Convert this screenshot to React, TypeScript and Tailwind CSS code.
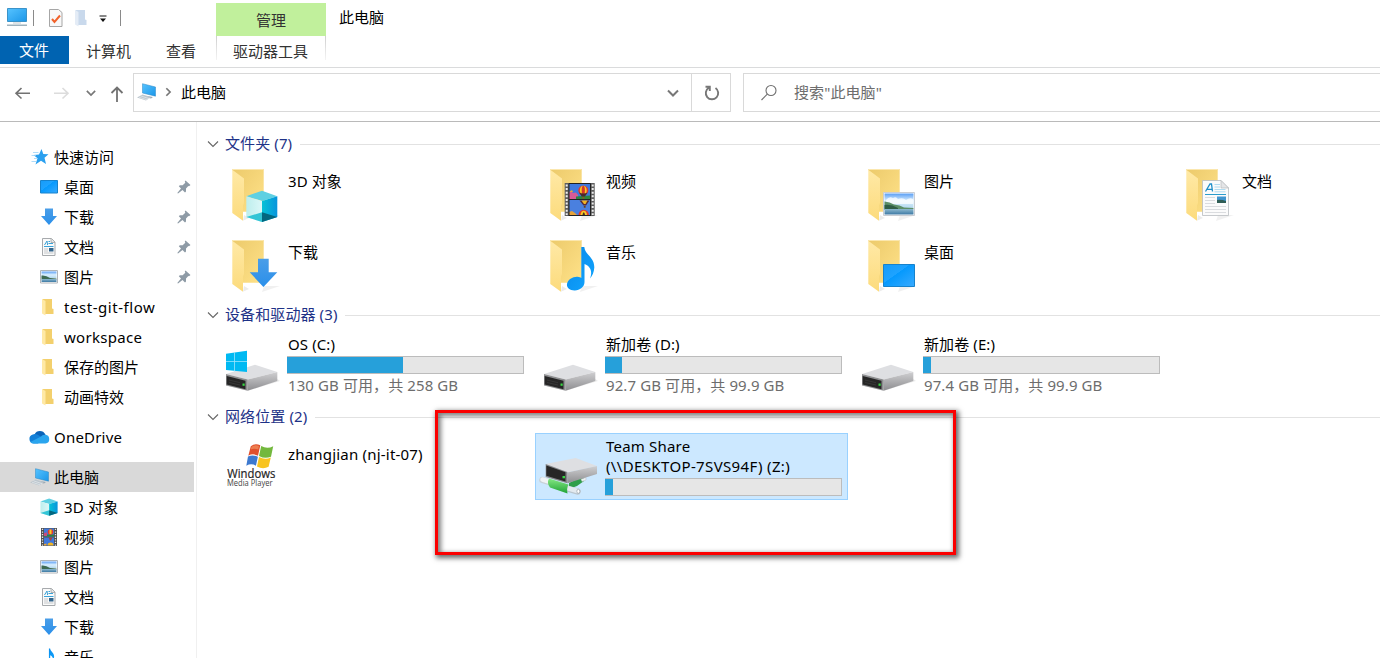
import React, { ReactNode } from "react";

const Defs = () => (
  <svg width="0" height="0" className="absolute">
    <defs>
      <linearGradient id="back" x1="0" y1="0" x2="1" y2="1">
        <stop offset="0" stopColor="#ecca6b" />
        <stop offset="1" stopColor="#ffe289" />
      </linearGradient>
      <linearGradient id="flap" x1="0" y1="0" x2="0" y2="1">
        <stop offset="0" stopColor="#ffe9a6" />
        <stop offset="1" stopColor="#fcdb7c" />
      </linearGradient>
      <linearGradient id="desk" x1="0" y1="0" x2="1" y2="1">
        <stop offset="0" stopColor="#169bf8" />
        <stop offset="0.42" stopColor="#1ea3ff" />
        <stop offset="0.43" stopColor="#0599fd" />
        <stop offset="1" stopColor="#38aaff" />
      </linearGradient>
      <linearGradient id="sky" x1="0" y1="0" x2="0" y2="1">
        <stop offset="0" stopColor="#5a9ef4" />
        <stop offset="0.5" stopColor="#d9efff" />
        <stop offset="1" stopColor="#b5d9ee" />
      </linearGradient>
      <linearGradient id="water" x1="0" y1="0" x2="0" y2="1">
        <stop offset="0" stopColor="#8db9cf" />
        <stop offset="1" stopColor="#3d79a4" />
      </linearGradient>
      <linearGradient id="arrow" x1="0" y1="0" x2="0" y2="1">
        <stop offset="0" stopColor="#4a9ee8" />
        <stop offset="1" stopColor="#2a8fea" />
      </linearGradient>
      <linearGradient id="cubeL" x1="0" y1="0" x2="1" y2="0">
        <stop offset="0" stopColor="#bdeeed" />
        <stop offset="1" stopColor="#dcf7f8" />
      </linearGradient>
      <linearGradient id="cubeR" x1="0" y1="0" x2="1" y2="0">
        <stop offset="0" stopColor="#05c2d6" />
        <stop offset="1" stopColor="#0794dc" />
      </linearGradient>
      <linearGradient id="side" x1="0" y1="0" x2="0" y2="1">
        <stop offset="0" stopColor="#cfcfd1" />
        <stop offset="1" stopColor="#8d8d90" />
      </linearGradient>
      <linearGradient id="note" x1="0" y1="0" x2="1" y2="1">
        <stop offset="0" stopColor="#0787e8" />
        <stop offset="1" stopColor="#12a6ff" />
      </linearGradient>
      <linearGradient id="green" x1="0" y1="0" x2="0" y2="1">
        <stop offset="0" stopColor="#86e885" />
        <stop offset="1" stopColor="#1fa335" />
      </linearGradient>
      <linearGradient id="screen" x1="0" y1="0" x2="1" y2="1">
        <stop offset="0" stopColor="#56c3ff" />
        <stop offset="1" stopColor="#1b96e8" />
      </linearGradient>
    </defs>
  </svg>
);

/* ---------- artwork shared by the large and small icons ---------- */

const Cube = () => (
  <g>
    <path d="M38 25.7 53.3 31.3 38 36 22.3 31.3z" fill="#5ed0e2" />
    <path d="M22.3 31.3 38 36V57L22.3 52z" fill="url(#cubeL)" />
    <path d="M53.3 31.3 38 36V57L53.3 52z" fill="url(#cubeR)" />
    <path d="M22.3 52 38 47.3V57z" fill="#33c5d6" />
    <path d="M53.3 52 38 47.3V57z" fill="#03667f" />
  </g>
);

const Arrow = () => <path d="M34 22.7H44.7V36.3H53.3L39.4 51 25.7 36.3H34z" fill="url(#arrow)" />;

const Film = () => (
  <g>
    <path d="M22.7 18H52.7V51H22.7z" fill="#5e5e5e" />
    <path d="M27 18.8H48.5V34H27z" fill="#3f78dd" />
    <path d="M27 35H48.5V50.2H27z" fill="#4a80df" />
    <path d="M27 27.5 29 26 31 28 34 27.5 36 30V34H27z" fill="#d85a96" />
    <path d="M27 27 30 25 31 27z" fill="#e9a53a" />
    <path d="M34 31.5 48.5 30.5V34H34z" fill="#2b8540" />
    <ellipse cx="41.3" cy="25.5" rx="5" ry="4.8" fill="#e23a2c" />
    <ellipse cx="41.3" cy="25.5" rx="3.4" ry="4.8" fill="#f6cb25" />
    <ellipse cx="41.3" cy="25.5" rx="1.6" ry="4.8" fill="#d6352b" />
    <path d="M37 27.5Q41.3 29.5 45.6 27.5L43 31.5H39.7z" fill="#4b2a2a" />
    <path d="M40.3 32H42.4V33.7H40.3z" fill="#8a5a1e" />
    <path d="M37.5 35.5H47.5L44 40.5H41.5z" fill="#5b2b36" />
    <path d="M39.5 35.5H45.5L43.5 39H42z" fill="#f0b424" />
    <path d="M41.8 41H43.6V42.7H41.8z" fill="#6a3f19" />
    <path d="M36.5 50A5.2 5.2 0 0 1 46.9 50z" fill="#e23a2c" />
    <path d="M38.5 50A3.3 5.2 0 0 1 45 50z" fill="#f6cb25" />
    <path d="M40.5 50A1.4 5.2 0 0 1 43 50z" fill="#4b2a2a" />
    <path d="M27 47 30 46 33 48 35 50H27z" fill="#e7a33a" />
    <path d="M27 18.5V51M48.5 18.5V51M27 34.5H48.5M27 18.5H48.5M27 50.5H48.5" stroke="#222" strokeWidth="1" />
    <path d="M24.7 19.5V50M50.7 19.5V50" stroke="#eeeeee" strokeWidth="2" strokeDasharray="2 1.6" />
  </g>
);

const Photo = () => (
  <g>
    <path d="M23.5 27.5H54.5V50.5H23.5z" fill="#fff" stroke="#c9cdd3" />
    <path d="M24.5 28.5H53.5V43H24.5z" fill="url(#sky)" />
    <path d="M26 35Q29 31 33 33 36 31 38 34 43 32 46 35 50 32 53 34V39H26z" fill="#fff" opacity=".75" />
    <path d="M24.5 36.5Q30 37 34 39.5 40 40 44 42.5L53.5 43V44H24.5z" fill="#5c8f68" />
    <path d="M24.5 40Q31 39 38 43V45H24.5z" fill="#2f5d45" />
    <path d="M24.5 44H53.5V49.5H24.5z" fill="url(#water)" />
  </g>
);

const Desk = () => <path d="M23.5 28.5H54.5V50.5H23.5z" fill="url(#desk)" stroke="#1782cc" />;

const Page = () => (
  <g>
    <path d="M24.5 15.5H43L50.5 23V50.5H24.5z" fill="#fbfbfb" stroke="#b9bcc0" strokeWidth=".8" />
    <path d="M43 15.5V23H50.5z" fill="#e4e5e7" stroke="#b0b3b6" strokeWidth=".6" />
    <path d="M27.5 26.5 32 19H33.5L34.5 26.5M29 24.3H34" fill="none" stroke="#1e8ec9" strokeWidth="1.3" />
    <path d="M36.5 19.5H42M36.5 22H42M36.5 24.5H47.5M36.5 26.8H47.5" stroke="#9ed4ef" strokeWidth=".8" />
    <path d="M27 29.5H48" stroke="#2b9ccc" strokeWidth="1" />
    <path d="M27 32.5H37M27 35.5H37M27 38.5H37M27 41.5H48M27 44.5H48M27 47.5H48" stroke="#d2d4d8" strokeWidth=".8" />
    <path d="M39 31.5H48V38H39z" fill="#4095cf" />
    <path d="M39 35Q43 34 48 36V38H39z" fill="#2f5d55" />
  </g>
);

const Note = () => (
  <path
    d="M39.3 11H42.3C43 19 52.5 21 52.3 31.5 52 36 50.5 40 48 42.5 50.5 36 49 30.5 42.5 28V46C42.5 51 37.5 54.7 32.5 54.5 27.5 54.3 24.5 51.5 25 48 25.7 43.5 31 40.5 35.5 40.8 37.5 41 38.5 41.5 39.3 42z"
    fill="url(#note)"
  />
);

const Folder = ({ children }: { children?: ReactNode }) => (
  <svg className="h-[60px] w-14 shrink-0" viewBox="0 0 56 60">
    <path d="M38 56 56 50 40 50z" fill="#000" opacity=".06" />
    <path d="M19 55.8 25 53 20 50z" fill="#000" opacity=".08" />
    <path d="M8.3 4H39.7V46.7H19z" fill="url(#back)" />
    <path d="M8.3 4.5H39.7" stroke="#fbe7ae" strokeWidth="1" />
    <path d="M8.3 4.8 20 13.5V38L19 40.5V55.7L8.3 48z" fill="url(#flap)" />
    {children}
  </svg>
);

const DriveBody = () => (
  <g>
    <path d="M24 45.7 56 36 52 33z" fill="#000" opacity=".08" />
    <path d="M2 29 31 19.7 53.3 27 23.7 34.5z" fill="#dedfe2" />
    <path d="M53.3 27V36L23.7 45.7V34.5z" fill="url(#side)" />
    <path d="M2 29 23.7 34.5V45.7L2 40.5z" fill="#8e8f91" />
    <path d="M2.7 31 21.5 35.8V44.2L2.7 39.5z" fill="#262626" />
    <path d="M5 35 16 37.7M5 37.5 16 40" stroke="#3e3e3e" strokeWidth=".7" />
    <path d="M18.5 38.5H20.7V40.8H18.5z" fill="#37d743" />
  </g>
);

const Drive = ({ system }: { system?: boolean }) => (
  <svg className="h-[56px] w-14 shrink-0" viewBox="0 0 56 56">
    <DriveBody />
    {system && (
      <g>
        <path d="M2 8.7 23 5.7V27L2 25z" fill="#00b9f2" />
        <path d="M10.5 7V26.5M2 16.5H23" stroke="#9be3fb" strokeWidth=".8" />
      </g>
    )}
  </svg>
);

const NetDrive = () => (
  <svg className="h-[65px] w-[59px] shrink-0" viewBox="-2 0 59 65">
    <path d="M34 46 43 43V47L36 52 28 55V49z" fill="#2f9e4a" />
    <path d="M40 45 45 43.5V46L41 47.5z" fill="#eef0f2" stroke="#b8bfc5" strokeWidth=".5" />
    <path d="M1.5 46 8 48" stroke="#c9d2d8" strokeWidth="6.5" strokeLinecap="round" />
    <path d="M1.5 45.5 8 47.5" stroke="#f0f3f5" strokeWidth="4.5" strokeLinecap="round" />
    <path d="M26 54.5 36.5 57.5" stroke="#bac6cf" strokeWidth="6.5" strokeLinecap="round" />
    <path d="M26 54 36.5 57" stroke="#e3eaef" strokeWidth="4.5" strokeLinecap="round" />
    <ellipse cx="37.3" cy="57.3" rx="1.5" ry="2" fill="#fff" stroke="#9aa4ac" strokeWidth=".7" />
    <path d="M8 44.5 27.5 50.5Q25.5 54 26.5 59.5L9 53.5Q5.5 49 8 44.5z" fill="url(#green)" />
    <path d="M4.7 30 34.7 24 56 32 26.3 38.5z" fill="#dedfe2" />
    <path d="M56 32V40L26.3 49.3V38.5z" fill="url(#side)" />
    <path d="M4.7 30 26.3 38V49.3L4.7 43z" fill="#858688" />
    <path d="M5.3 31.5 24.5 38.3V47.5L5.3 41.8z" fill="#262626" />
    <path d="M21.5 42H24V44.3H21.5z" fill="#37d743" />
  </svg>
);

const MediaPlayer = () => (
  <svg className="h-[65px] w-14 shrink-0" viewBox="224 433 56 65">
    <path d="M250.8 446.3Q255 442.7 260.3 445.3L258 455.7Q253 453 248.3 455.7z" fill="#e0502c" />
    <path d="M261.2 446Q267 449.5 273.2 446.3L271 456.7Q265 459.3 259 456z" fill="#73b83d" />
    <path d="M248 456.5Q253 454.2 257.9 456.8L255.9 465.8Q251.5 463 246.3 465.7z" fill="#3d79cf" />
    <path d="M259 457Q265 460.3 270.8 457.5L268.6 466.7Q263 469.7 257 466.5z" fill="#f8c420" />
    <path d="M251.5 446.7Q255 444 259 446L258.2 449.5Q254 448 250.8 449.5z" fill="#f0895a" opacity=".8" />
    <text x="227.3" y="477.5" textLength="48" lengthAdjust="spacingAndGlyphs" fontSize="12.5" fill="#222" stroke="#222" strokeWidth=".2" fontFamily="Open Sans, sans-serif">Windows</text>
    <text x="227" y="485.8" textLength="45.5" lengthAdjust="spacingAndGlyphs" fontSize="8.5" fill="#444" fontFamily="Open Sans, sans-serif">Media Player</text>
  </svg>
);

/* ---------- small icons ---------- */

const Small = ({ box, children }: { box: string; children: ReactNode }) => (
  <svg className="h-[18px] w-[18px] shrink-0" viewBox={box}>{children}</svg>
);

const SmallFolder = ({ faded }: { faded?: boolean }) => (
  <svg className="h-[18px] w-[18px] shrink-0" viewBox="0 0 18 18">
    <path d="M2.5 1H12V10.5L13.5 11V16H5z" fill={faded ? "#c9d9ec" : "#f3d06d"} />
    <path d="M2 1 5.5 3V17.5L2 15.5z" fill={faded ? "#e4ecf6" : "#ffe9a6"} />
  </svg>
);

const SDesk = () => (
  <Small box="0 0 18 18">
    <path d="M.5 2.5H17.5V15H.5z" fill="url(#desk)" stroke="#1782cc" />
  </Small>
);
const SDown = () => (
  <Small box="0 0 18 18">
    <path d="M5 .5H13V8H17L9 17 1 8H5z" fill="url(#arrow)" />
  </Small>
);
const SDoc = () => (
  <Small box="0 0 18 18">
    <path d="M2.5.5H11.5L15 4V17.5H2.5z" fill="#fafafa" stroke="#a7aaad" />
    <path d="M11 .8V4.5H15" fill="#e2e2e2" stroke="#9a9da0" strokeWidth=".7" />
    <path d="M4.5 7 7 3 7.6 7M8.5 5.5H13M8.5 3.5H10M4 8.5H13.5" fill="none" stroke="#3ba3d8" />
    <path d="M4 11H8M4 13H8M4 15H13.5" stroke="#c4c7ca" />
    <path d="M9 10H13.5V13.5H9z" fill="#33658c" />
  </Small>
);
const SPic = () => (
  <Small box="0 0 18 18">
    <path d="M.5 2.5H17.5V15H.5z" fill="#fff" stroke="#b0b4b8" />
    <path d="M1.5 3.5H16.5V10H1.5z" fill="url(#sky)" />
    <path d="M1.5 7.5Q6 7 10 10L16.5 10.5V11.5H1.5z" fill="#3d6b54" />
    <path d="M1.5 11H16.5V14H1.5z" fill="url(#water)" />
  </Small>
);
const SCube = () => <Small box="21.5 25 32.5 32.5"><Cube /></Small>;
const SFilm = () => (
  <Small box="0 0 18 18">
    <path d="M1 0H17V18H1z" fill="#4e4e4e" />
    <path d="M4 .5H14V8.5H4zM4 9.5H14V17.5H4z" fill="#3f78dd" />
    <path d="M4 6.5H14V8.5H4z" fill="#2b8540" />
    <path d="M4 5 7 4.5V8H4z" fill="#c84b7d" />
    <ellipse cx="10.5" cy="4" rx="2.8" ry="2.7" fill="#e23a2c" />
    <path d="M9.5 1.5H11.5V6H9.5z" fill="#f6cb25" />
    <path d="M8.5 9.5H12.5L11 12.5H10z" fill="#a5443a" />
    <path d="M7.5 17.5A3 3 0 0 1 13.5 17.5z" fill="#f0b424" />
    <path d="M4 16 6.5 15.5V17.5H4z" fill="#e7a33a" />
    <path d="M2.5.8V18M15.5.8V18" stroke="#e6e6e6" strokeWidth="1.3" strokeDasharray="1.3 1.3" />
  </Small>
);
const SNote = () => <Small box="17 10 45 45"><Note /></Small>;

const SStar = () => (
  <svg className="h-[18px] w-5 shrink-0" viewBox="0 0 20 18">
    <path d="M11.5 1 13.3 6 18.5 6.3 14.5 9.8 16 16 11 12.7 5.5 16.5 7.5 10.2 3.5 7 9 6.4z" fill="#2ba0ef" />
    <path d="M3 4.5H8.5M1.5 7.5H6M4 10.5H7.5M1.5 13.5H6" stroke="#9bd2f7" strokeWidth=".8" />
  </svg>
);
const SCloud = () => (
  <svg className="-ml-px h-[18px] w-[21px] shrink-0" viewBox="0 0 21 18">
    <path d="M5.5 6.5A6 6 0 0 1 16.3 6.5L16.5 12H5z" fill="#0a63b8" />
    <path d="M4.5 15.5A4.6 4.6 0 0 1 3.8 6.5Q6.5 5 9.5 7.3L15 10.5 9 15.5z" fill="#1380d8" />
    <path d="M1.5 14 12 8.5Q13.5 6.3 16.5 6.8A4.4 4.4 0 0 1 16.5 15.5H4.5Q2.5 15.5 1.5 14z" fill="#2aa5ee" />
  </svg>
);
const SPc = () => (
  <svg className="h-[18px] w-5 shrink-0" viewBox="0 0 20 18">
    <path d="M5.5.7 18.5 4V13.2L5.5 10z" fill="url(#screen)" stroke="#2a86c4" strokeWidth=".5" />
    <path d="M10 13 16 14 14 15.5 10 14.5z" fill="#9aa8b3" />
    <path d="M5.5 11.5 14 14 9 17.5 0 14.5z" fill="#bcc6ce" />
    <path d="M3.5 12.8 12 15.7M2 14.2 10 16.8" stroke="#eef1f3" strokeWidth=".6" />
  </svg>
);

const Pin = () => (
  <svg className="h-[14px] w-[14px] shrink-0" viewBox="0 0 14 14">
    <path d="M8.5.5 13.5 5 12 6.2 11.3 6 9 8.5V11.5L8 12.5 5.5 10 1 13.5.3 13 4 8.5 1.8 6.3 2.8 5.3H5.7L8.3 2.7 7.8 1.5z" fill="#8e9ba6" />
  </svg>
);

const Chev = ({ className, dir = "down" }: { className: string; dir?: "down" | "right" }) => (
  <svg className={className} viewBox="0 0 12 12" fill="none" stroke="currentColor">
    <path d={dir === "down" ? "M1 3.5 6 8.5 11 3.5" : "M4 1.5 8.5 6 4 10.5"} />
  </svg>
);

/* ---------- navigation pane ---------- */

type NavProps = { icon: ReactNode; label: string; root?: boolean; pinned?: boolean; active?: boolean; spacing?: string };

const Nav = ({ icon, label, root, pinned, active, spacing = "" }: NavProps) => (
  <div
    className={`flex h-[30px] w-[194px] shrink-0 items-center ${root ? "gap-1 pl-[30px]" : "gap-1.5 pl-10"} ${active ? "bg-[#d9d9d9]" : ""}`}
  >
    {icon}
    <span className={`grow whitespace-nowrap ${spacing}`}>{label}</span>
    {pinned && <span className="mr-[3px]"><Pin /></span>}
  </div>
);

const Sidebar = () => (
  <nav className="flex w-[197px] shrink-0 flex-col overflow-hidden border-r border-[#f0f0f0] pt-5">
    <Nav root icon={<SStar />} label="快速访问" />
    <Nav pinned icon={<SDesk />} label="桌面" />
    <Nav pinned icon={<SDown />} label="下载" />
    <Nav pinned icon={<SDoc />} label="文档" />
    <Nav pinned icon={<SPic />} label="图片" />
    <Nav icon={<SmallFolder />} label="test-git-flow" spacing="tracking-[0.55px]" />
    <Nav icon={<SmallFolder />} label="workspace" spacing="tracking-[0.3px]" />
    <Nav icon={<SmallFolder />} label="保存的图片" />
    <Nav icon={<SmallFolder />} label="动画特效" />
    <div className="flex shrink-0 flex-col gap-2.5 pt-2.5">
      <Nav root icon={<SCloud />} label="OneDrive" spacing="tracking-[0.2px]" />
      <Nav root active icon={<SPc />} label="此电脑" />
    </div>
    <Nav icon={<SCube />} label="3D 对象" spacing="tracking-[0.2px]" />
    <Nav icon={<SFilm />} label="视频" />
    <Nav icon={<SPic />} label="图片" />
    <Nav icon={<SDoc />} label="文档" />
    <Nav icon={<SDown />} label="下载" />
    <Nav icon={<SNote />} label="音乐" />
  </nav>
);

/* ---------- content pane ---------- */

const Group = ({ title, className }: { title: string; className: string }) => (
  <div className={`flex items-center pl-[10px] text-[#1e3287] ${className}`}>
    <Chev className="mr-[6px] h-3 w-3 stroke-[1.1] text-[#666]" />
    <span className="whitespace-nowrap pb-0.5 tracking-[0.1px]">{title}</span>
    <span className="ml-2 mt-px h-px grow bg-[#e2e2e2]" />
  </div>
);

const FolderItem = ({ label, children }: { label: string; children: ReactNode }) => (
  <div className="flex h-[71px] w-[318px] shrink-0 gap-2 pl-[7px] pt-[5px]">
    <Folder>{children}</Folder>
    <span className="mt-[5px] h-[22px] leading-[22px] tracking-[0.1px]">{label}</span>
  </div>
);

const Bar = ({ used }: { used: number }) => (
  <div className="h-[18px] w-[237px] border border-[#bcbcbc] bg-[#e6e6e6]">
    <div className="-ml-px h-4 bg-[#26a0da]" style={{ width: used }} />
  </div>
);

const DriveItem = ({ label, free, used, system }: { label: string; free: string; used: number; system?: boolean }) => (
  <div className="flex h-[76px] w-[318px] shrink-0 gap-[7px] pl-[7px]">
    <div className="pt-[17px]"><Drive system={system} /></div>
    <div className="flex flex-col pt-[5px]">
      <span className="h-[23px] pl-px leading-[22px] tracking-[0.1px]">{label}</span>
      <Bar used={used} />
      <span className="whitespace-nowrap pl-px leading-[22px] tracking-[0.1px] text-[#6d6d6d]">{free}</span>
    </div>
  </div>
);

const Content = () => (
  <main className="flex min-w-0 grow flex-col overflow-hidden pt-[7px]">
    <Group title="文件夹 (7)" className="h-[30px]" />
    <div className="mt-px flex flex-wrap pl-5">
      <FolderItem label="3D 对象"><Cube /></FolderItem>
      <FolderItem label="视频"><Film /></FolderItem>
      <FolderItem label="图片"><Photo /></FolderItem>
      <div className="w-[200px] overflow-hidden"><FolderItem label="文档"><Page /></FolderItem></div>
      <FolderItem label="下载"><Arrow /></FolderItem>
      <FolderItem label="音乐"><Note /></FolderItem>
      <FolderItem label="桌面"><Desk /></FolderItem>
    </div>
    <Group title="设备和驱动器 (3)" className="h-[26px]" />
    <div className="flex pl-5">
      <DriveItem system label="OS (C:)" free="130 GB 可用，共 258 GB" used={116} />
      <DriveItem label="新加卷 (D:)" free="92.7 GB 可用，共 99.9 GB" used={17} />
      <DriveItem label="新加卷 (E:)" free="97.4 GB 可用，共 99.9 GB" used={8} />
    </div>
    <Group title="网络位置 (2)" className="h-[26px]" />
    <div className="relative mt-[3px] flex pl-5">
      <div className="flex w-[318px] gap-2 pl-[7px]">
        <MediaPlayer />
        <span className="mt-[10px] h-[22px] whitespace-nowrap leading-[22px] tracking-[0.2px]">zhangjian (nj-it-07)</span>
      </div>
      <div className="flex h-[67px] w-[313px] gap-[7px] border border-[#99d1ff] bg-[#cce8ff] pl-[3px]">
        <NetDrive />
        <div className="flex flex-col pt-[2px] leading-5">
          <span className="pl-px tracking-[0.2px]">Team Share</span>
          <span className="mb-0.5 whitespace-nowrap pl-px tracking-[0.36px]">(\\DESKTOP-7SVS94F) (Z:)</span>
          <Bar used={8} />
        </div>
      </div>
      <div className="absolute left-[238px] top-[-23px] h-[145px] w-[521px] border-[3px] border-[#fb0000] shadow-[2px_2px_5px_1px_rgba(0,0,0,0.6),inset_2px_2px_5px_1px_rgba(0,0,0,0.5)]" />
    </div>
  </main>
);

/* ---------- title, ribbon and address rows ---------- */

const TitleRow = () => (
  <header className="flex h-9 shrink-0">
    <div className="flex w-[216px] items-center pl-[6px]">
      <svg className="-mt-0.5 h-5 w-[22px]" viewBox="0 0 22 20">
        <path d="M1.5 1.5H20.5V14.5H1.5z" fill="url(#screen)" stroke="#3b93c9" />
        <path d="M7 15.5H15V16.5H7z" fill="#c0c8cd" />
        <path d="M1 17.5H21V19H1z" fill="#9fb2bd" />
      </svg>
      <span className="ml-[5px] h-4 w-px bg-[#8a8a8a]" />
      <svg className="ml-[14px] h-[18px] w-[15px]" viewBox="0 0 15 18">
        <path d="M1.5 .5H10.5L14 3.5V17.5H1.5z" fill="#f8f8f8" stroke="#a6a6a6" />
        <path d="M4 10 6.5 13 12 6.5" fill="none" stroke="#f1622b" strokeWidth="2" />
      </svg>
      <span className="ml-[10px] flex"><SmallFolder faded /></span>
      <svg className="ml-[8px] mt-px h-2 w-2" viewBox="0 0 8 8">
        <path d="M.5 1H7.5" stroke="#111" />
        <path d="M1 3.5H7L4 7z" fill="#111" />
      </svg>
      <span className="ml-[13px] h-4 w-px bg-[#8a8a8a]" />
    </div>
    <div className="mt-[3px] flex h-[33px] w-[110px] items-center justify-center bg-[#c1f09c] text-[#333]">管理</div>
    <div className="flex h-[34px] items-center pl-[13px]">此电脑</div>
  </header>
);

const Ribbon = () => (
  <div className="flex h-8 shrink-0 border-b border-[#dadbdc] text-[#333]">
    <div className="flex h-7 w-[69px] items-center justify-center bg-[#0063b1] pr-px text-white">文件</div>
    <div className="flex h-[29px] w-[79px] items-center justify-center">计算机</div>
    <div className="flex h-[29px] w-[66px] items-center justify-center">查看</div>
    <div className="ml-[2px] h-6 w-px bg-linear-to-b from-[#cfcfcf] to-[#f4f4f4]" />
    <div className="flex h-[29px] w-[108px] items-center justify-center pr-px">驱动器工具</div>
    <div className="h-6 w-px bg-linear-to-b from-[#cfcfcf] to-[#f4f4f4]" />
  </div>
);

const AddressRow = () => (
  <div className="flex h-[54px] shrink-0 border-b border-[#bababa] pt-[5px]">
    <div className="flex h-[39px] w-[133px] items-center">
      <svg className="ml-[14px] h-4 w-[18px]" viewBox="0 0 18 16" fill="none" stroke="#727272" strokeWidth="1.6">
        <path d="M16 8.3H2M7.5 3 2 8.3 7.5 13.5" />
      </svg>
      <svg className="ml-[21px] h-4 w-[18px]" viewBox="0 0 18 16" fill="none" stroke="#dcdcdc" strokeWidth="1.6">
        <path d="M1 8.3H15M9.5 3 15 8.3 9.5 13.5" />
      </svg>
      <Chev className="ml-[15px] h-[10px] w-[10px] stroke-[2] text-[#777]" />
      <svg className="ml-[13px] mt-0.5 h-[18px] w-4" viewBox="0 0 16 18" fill="none" stroke="#727272" strokeWidth="1.8">
        <path d="M8 17V2.5M2.5 8 8 2.5 13.5 8" />
      </svg>
    </div>
    <div className="flex h-[39px] w-[598px] items-center border border-[#d9d9d9]">
      <span className="-mt-0.5 ml-[3px] flex"><SPc /></span>
      <Chev dir="right" className="-mt-0.5 ml-[5px] h-[10px] w-[12px] stroke-[2] text-[#777]" />
      <span className="ml-[7px] grow pb-0.5">此电脑</span>
      <Chev className="mr-[12px] h-3 w-3 stroke-[2] text-[#777]" />
      <span className="h-full w-px bg-[#d9d9d9]" />
      <svg className="ml-[12px] mr-[10px] h-4 w-4" viewBox="0 0 16 16" fill="none" stroke="#777" strokeWidth="1.9">
        <path d="M11.5 3A6.2 6.2 0 1 1 4.8 2.8M1.5 1.8H5.8V6" />
      </svg>
    </div>
    <div className="ml-3 flex h-[39px] grow items-center border border-r-0 border-[#d9d9d9]">
      <svg className="ml-[16px] h-[18px] w-[18px]" viewBox="0 0 18 18" fill="none" stroke="#6f6f6f" strokeWidth="1.1">
        <circle cx="11" cy="6.5" r="5" />
        <path d="M7.3 10.2 1.5 16" />
      </svg>
      <span className="ml-[16px] pb-0.5 tracking-[0.1px] text-[#6d6d6d]">搜索"此电脑"</span>
    </div>
  </div>
);

export default function App() {
  return (
    <div className="flex h-[658px] w-[1380px] flex-col overflow-hidden bg-white font-['Noto_Sans','Noto_Sans_CJK_SC',sans-serif] text-[15px] leading-5 text-black">
      <Defs />
      <TitleRow />
      <Ribbon />
      <AddressRow />
      <div className="flex min-h-0 grow">
        <Sidebar />
        <Content />
      </div>
    </div>
  );
}
